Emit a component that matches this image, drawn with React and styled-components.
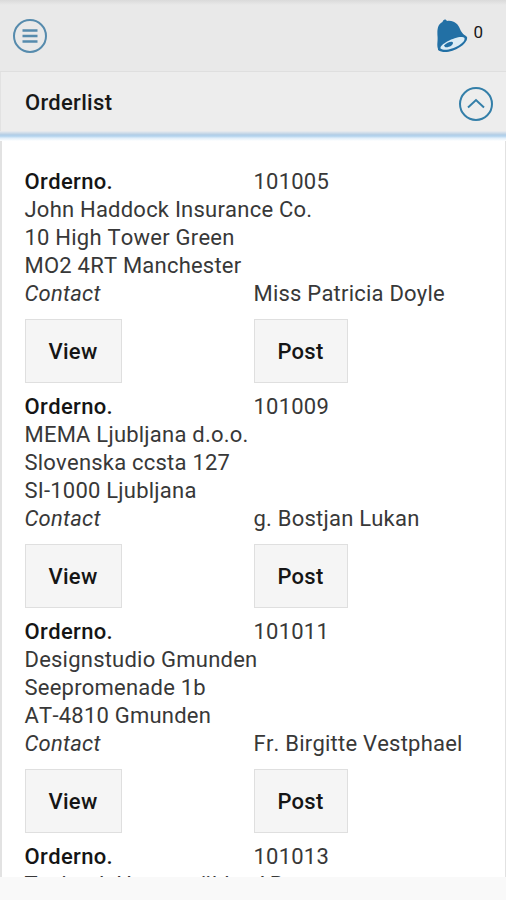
import React from "react";
import styled, { createGlobalStyle } from "styled-components";

const GlobalStyle = createGlobalStyle`
  * { box-sizing: border-box; }
  body { margin: 0; background: #f9f9f9; font-family: Roboto, sans-serif; color: #181818; }
`;

const Screen = styled.div`
  height: 900px;
  overflow: hidden;
  display: flex;
  flex-direction: column;
`;

const TopBar = styled.header`
  flex: 0 0 72px;
  display: flex;
  align-items: center;
  justify-content: space-between;
  padding: 0 23px 0 12px;
  background: linear-gradient(#dadada 0, #e9e9e9 5px);
  border-bottom: 1px solid #dfdfdf;
`;

const IconButton = styled.button`
  display: flex;
  padding: 0;
  border: 0;
  background: none;
`;

const Notifications = styled.div`
  display: flex;
  align-items: center;
  gap: 5px;
`;

const Count = styled.span`
  font-size: 17px;
  line-height: 20px;
  padding-bottom: 7px;
`;

const PanelHeader = styled.div`
  flex: 0 0 63px;
  display: flex;
  align-items: center;
  justify-content: space-between;
  padding: 0 12px 0 24px;
  background: #ededed;
  border-left: 1px solid #e2e2e2;
`;

const Title = styled.h1`
  margin: 0;
  padding-bottom: 2px;
  font-size: 22px;
  line-height: 28px;
  font-weight: 500;
  letter-spacing: 0.3px;
`;

const Divider = styled.div`
  flex: 0 0 10px;
  margin-top: -4px;
  background: linear-gradient(#ebecee, #b8d0e6 35%, #b1d2ed 50%, #e2effa 72%, #fff);
`;

const List = styled.main`
  flex: 0 0 736px;
  overflow: hidden;
  padding: 27px 23px 0 22.5px;
  background: #fff;
  border-left: 2px solid #e2e2e2;
  border-right: 1px solid #e2e2e2;
`;

const Order = styled.section`
  height: 225px;
  font-size: 22px;
  line-height: 28px;
  font-weight: 400;
`;

const Row = styled.div`
  display: grid;
  grid-template-columns: 229px 1fr;
  white-space: nowrap;
`;

const Line = styled.div`
  white-space: nowrap;
  letter-spacing: 0.22px;
  font-kerning: none;
  color: #383838;
`;

const Label = styled(Line).attrs({ as: "strong" })`
  font-weight: 500;
  letter-spacing: 0.35px;
  color: #151515;
`;

const ContactLabel = styled(Line).attrs({ as: "em" })``;

const Actions = styled(Row)`
  padding-top: 11px;
  justify-items: start;
`;

const Button = styled.button`
  width: ${(p) => p.$width}px;
  height: 64px;
  padding: 2px 0 0;
  border: 1px solid #dfdfdf;
  background: #f5f5f5;
  color: #151515;
  font: 500 22px/28px Roboto, sans-serif;
  letter-spacing: 0.3px;
`;

const orders = [
  { no: "101005", lines: ["John Haddock Insurance Co.", "10 High Tower Green", "MO2 4RT Manchester"], contact: "Miss Patricia Doyle" },
  { no: "101009", lines: ["MEMA Ljubljana d.o.o.", "Slovenska ccsta 127", "SI-1000 Ljubljana"], contact: "g. Bostjan Lukan" },
  { no: "101011", lines: ["Designstudio Gmunden", "Seepromenade 1b", "AT-4810 Gmunden"], contact: "Fr. Birgitte Vestphael" },
  { no: "101013", lines: ["Technol. Hasenmühler AB"] },
];

const MenuIcon = () => (
  <svg width="36" height="36" viewBox="0 0 36 36" fill="none" stroke="#568bad">
    <circle cx="18" cy="18" r="16" strokeWidth="2" />
    <path d="M10.500 12.500h15M10.500 18h15M10.500 23.500h15" strokeWidth="2.4" />
  </svg>
);

const BellIcon = () => (
  <svg width="32" height="36" viewBox="0 0 32 36">
    <path fill="#2270a5" d="M2 31C.5 27 2 24 1.500 18C1 11 2 6 6.500 4C7 1 10 .500 11 3C18 2 22 6 24 11C26 16 29 17 31 19C33 27 11 39 2 32Z" />
    <path fill="#dbecf5" d="M4.500 30.500C3 26 24 16 28.500 20C30 26 11 35 4.500 30.500Z" />
    <path fill="#2270a5" d="M8 27.500C11 24 17 22.500 17 25C17 27.500 12 30 9 29Z" />
  </svg>
);

const CollapseIcon = () => (
  <svg width="36" height="36" viewBox="0 0 36 36" fill="none" stroke="#347fa9">
    <circle cx="18" cy="18" r="16" strokeWidth="2" />
    <path d="M10 21.500L18 14L26 21.500" strokeWidth="2" />
  </svg>
);

export default function App() {
  return (
    <>
      <GlobalStyle />
      <Screen>
        <TopBar>
          <IconButton aria-label="Menu"><MenuIcon /></IconButton>
          <Notifications><BellIcon /><Count>0</Count></Notifications>
        </TopBar>
        <PanelHeader>
          <Title>Orderlist</Title>
          <IconButton aria-label="Collapse"><CollapseIcon /></IconButton>
        </PanelHeader>
        <Divider />
        <List>
          {orders.map((o) => (
            <Order key={o.no}>
              <Row><Label>Orderno.</Label><Line>{o.no}</Line></Row>
              {o.lines.map((l) => <Line key={l}>{l}</Line>)}
              {o.contact && (
                <>
                  <Row><ContactLabel>Contact</ContactLabel><Line>{o.contact}</Line></Row>
                  <Actions><Button $width={97}>View</Button><Button $width={94}>Post</Button></Actions>
                </>
              )}
            </Order>
          ))}
        </List>
      </Screen>
    </>
  );
}
